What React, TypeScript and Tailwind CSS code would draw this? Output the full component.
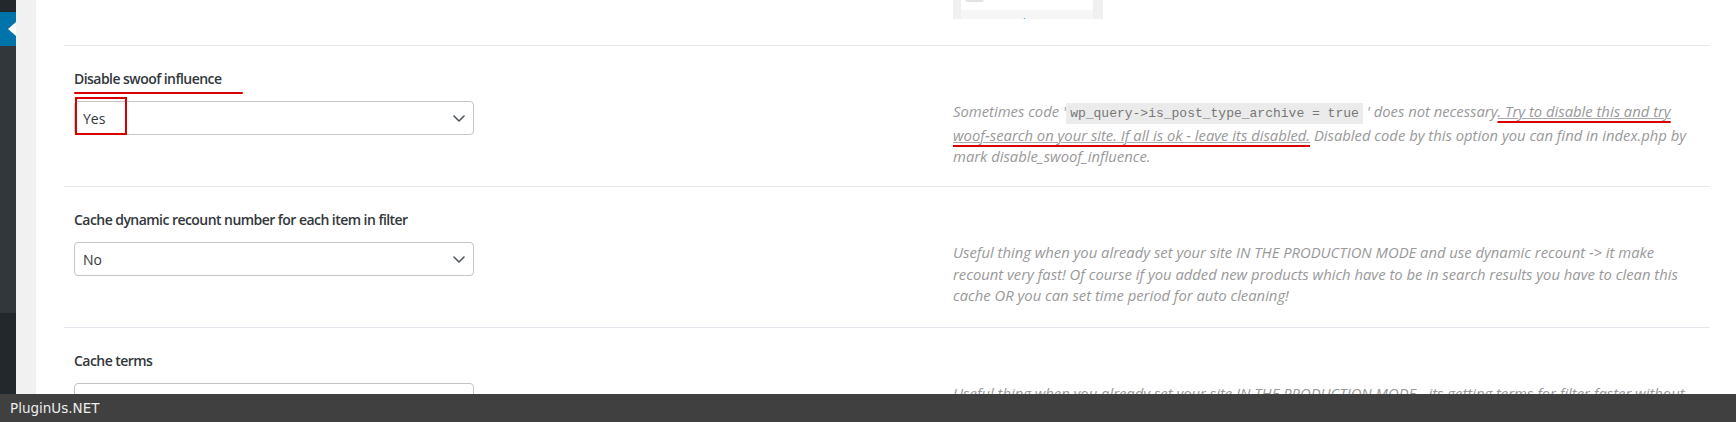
import { ReactNode } from 'react';

const labelFont = { fontFamily: '"Open Sans", "Liberation Sans", sans-serif' };

function Chevron() {
  return (
    <svg width="12" height="7" viewBox="0 0 12 7" fill="none">
      <path d="M1 1l5 5 5-5" stroke="#50575e" strokeWidth="1.6" strokeLinecap="round" strokeLinejoin="round" />
    </svg>
  );
}

function SelectBox({ value, boxed }: { value: string; boxed?: boolean }) {
  return (
    <div className="relative w-[400px]">
      <div className="flex h-[34px] items-center justify-between rounded-[4px] border border-[#c3c4c7] bg-white pl-[8px] pr-[8px] text-[14px] text-[#32373c]">
        <span>{value}</span>
        <Chevron />
      </div>
      {boxed && (
        <div className="absolute left-[1px] top-[-4px] h-[38px] w-[52px] border-2 border-[#d90000]" />
      )}
    </div>
  );
}

interface RowProps {
  label: string;
  value: string;
  annotate?: boolean;
  children: ReactNode;
}

function SettingRow({ label, value, annotate, children }: RowProps) {
  return (
    <div className="grid grid-cols-[889px_1fr] gap-y-[12px] border-b border-[#e3e8ed] pt-[23px] pb-[51px]" style={labelFont}>
      <div className="relative px-[10px] text-[14px] font-semibold leading-[20px] tracking-[-0.55px] text-[#32373c]">
        {label}
        {annotate && <div className="absolute left-[10px] top-[23px] h-[2px] w-[169px] rounded-full bg-[#d90000]" />}
      </div>
      <div />
      <div className="px-[10px]">
        <SelectBox value={value} boxed={annotate} />
      </div>
      <div className="h-[34px] pr-[14px] text-[14.8px] italic leading-[21.5px] text-[#999]">{children}</div>
    </div>
  );
}

export default function App() {
  return (
    <div className="relative flex h-[422px] w-full overflow-hidden bg-white">
      {/* admin menu edge */}
      <div className="flex w-[16px] flex-col">
        <div className="h-[12px] bg-[#23282d]" />
        <div className="flex h-[34px] items-center justify-end bg-[#0073aa]">
          <div className="h-0 w-0 border-y-[7px] border-r-[8px] border-y-transparent border-r-white" />
        </div>
        <div className="h-[267px] bg-[#32373c]" />
        <div className="flex-1 bg-[#23282d]" />
      </div>
      <div className="w-[20px] bg-[#f1f1f1]" />

      <div className="ml-[28px] mr-[26px] flex-1">
        {/* tail of previous option */}
        <div className="grid h-[46px] grid-cols-[889px_1fr] border-b border-[#e3e8ed]">
          <div />
          <div className="flex h-[19px] w-[150px] flex-col overflow-hidden bg-[#f0f0f0] pl-[8px] pr-[10px]">
            <div className="relative h-[10px] bg-white">
              <div className="absolute left-[4px] top-[-10px] h-[12px] w-[19px] rounded-[3px] bg-[#e2e2e2]" />
            </div>
            <div className="h-[9px] bg-[#f6f6f6] pl-[4px] pt-[7px] text-[12px] leading-[14px] text-[#2a9fd6]" style={labelFont}>
              Autocomplete
            </div>
          </div>
        </div>

        <SettingRow label="Disable swoof influence" value="Yes" annotate>
          Sometimes code '
          <code
            className="bg-[#ebebeb] px-[4px] py-[3px] text-[13px] not-italic text-[#777]"
            style={{ fontFamily: '"Liberation Mono", "DejaVu Sans Mono", monospace' }}
          >
            wp_query-&gt;is_post_type_archive = true
          </code>
          {' '}' does not necessary
          <span className="underline decoration-[#d90000] decoration-2 underline-offset-[4px]">
            <span className="underline decoration-[#aaa] decoration-1 underline-offset-[1px]">
              . Try to disable this and try woof&#8209;search on your site. If all is ok - leave its disabled.
            </span>
          </span>{' '}
          Disabled code by this option you can find in index.php by mark disable_swoof_influence.
        </SettingRow>

        <SettingRow label="Cache dynamic recount number for each item in filter" value="No">
          Useful thing when you already set your site IN THE PRODUCTION MODE and use dynamic recount -&gt; it make recount very
          fast! Of course if you added new products which have to be in search results you have to clean this cache OR you can
          set time period for auto cleaning!
        </SettingRow>

        <SettingRow label="Cache terms" value="No">
          Useful thing when you already set your site IN THE PRODUCTION MODE - its getting terms for filter faster without big
          MySQL queries! If you actively adds new terms every day or week you can set cron period for cleaning.
        </SettingRow>
      </div>

      {/* watermark bar */}
      <div
        className="absolute bottom-0 left-0 right-0 flex h-[28px] items-center bg-[#404040] pl-[10px] text-[13.5px] text-[#ececec]"
        style={{ fontFamily: '"DejaVu Sans", sans-serif' }}
      >
        PluginUs.NET
      </div>
    </div>
  );
}
